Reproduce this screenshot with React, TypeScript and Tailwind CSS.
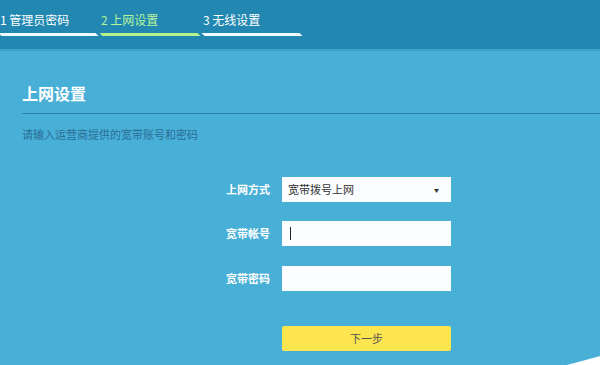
import React from "react";

const STEPS = [
  { label: "1 管理员密码", active: false },
  { label: "2 上网设置", active: true },
  { label: "3 无线设置", active: false },
];

const FONT = { fontFamily: '"Noto Sans CJK SC", "Noto Sans", sans-serif' };

function Field({ label, children }: { label: string; children: React.ReactNode }) {
  return (
    <div className="flex items-center">
      <div className="w-[270px] text-right text-[11px] font-bold text-white">{label}</div>
      <div className="ml-3 w-[169px]">{children}</div>
    </div>
  );
}

export default function App() {
  return (
    <div className="relative h-[365px] w-[600px] overflow-hidden bg-[#48afd7]" style={FONT}>
      {/* Step header */}
      <div className="h-[51px] border-b-2 border-[#3da3cc] bg-[#2288b1]">
        <div className="flex gap-[4px] pt-[11px]">
          {STEPS.map((s, i) => (
            <div key={i} className={i === 0 ? "w-[97px]" : "w-[98px]"}>
              <div
                className={`h-[18px] text-[12px] leading-[18px] ${s.active ? "text-[#b6f59a]" : "text-white"}`}
              >
                {s.label}
              </div>
              <div
                className={`mt-[4px] h-[3px] skew-x-[45deg] ${s.active ? "bg-[#b4f38c]" : "bg-[#eefaff]"}`}
              />
            </div>
          ))}
        </div>
      </div>

      {/* Content */}
      <div className="pl-[22px] pt-[31px]">
        <div className="text-[16px] font-bold leading-[22px] text-white">上网设置</div>
        <div className="mt-[9px] h-px bg-[#2b83ae]" />
        <div className="mt-[12px] text-[11px] leading-[16px] text-[#2a6e96]">请输入运营商提供的宽带账号和密码</div>
      </div>

      <div className="mt-[35px] flex flex-col gap-[19px]">
        <Field label="上网方式">
          <div className="flex h-[25px] items-center justify-between bg-[#fbfdfe] pl-[6px] pr-[12px] text-[11px] text-[#333]">
            <span>宽带拨号上网</span>
            <span className="text-[5px] text-[#333]">▼</span>
          </div>
        </Field>
        <Field label="宽带帐号">
          <div className="flex h-[25px] items-center bg-[#fbfdfe] pl-[8px]">
            <span className="h-[13px] w-px bg-[#222]" />
          </div>
        </Field>
        <div className="mt-px">
          <Field label="宽带密码">
            <div className="h-[25px] bg-[#fbfdfe]" />
          </Field>
        </div>
        <div className="mt-[16px] flex">
          <div className="ml-[282px] flex h-[25px] w-[169px] items-center justify-center rounded-[2px] bg-[#fde54f] text-[11px] text-[#555]">
            下一步
          </div>
        </div>
      </div>

      {/* corner mark */}
      <svg className="absolute bottom-0 right-0" width="33" height="10" viewBox="0 0 33 10">
        <polygon points="0,10 26,3 33,1 33,10" fill="#ffffff" />
      </svg>
    </div>
  );
}
